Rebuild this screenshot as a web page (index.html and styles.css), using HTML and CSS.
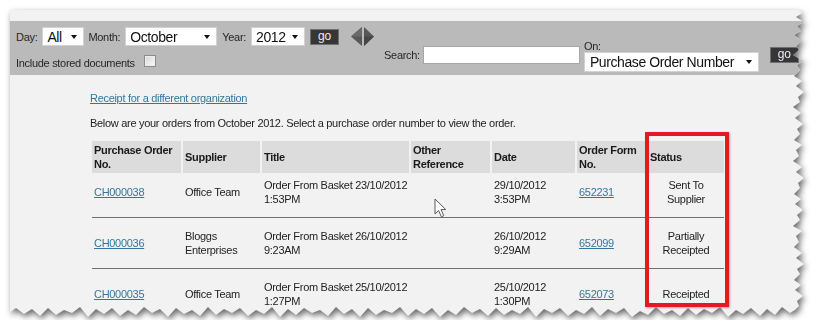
FILE: index.html
```html
<!DOCTYPE html>
<html lang="en">
<head>
    <meta charset="UTF-8">
    <meta name="viewport" content="width=device-width, initial-scale=1.0">
    <title>Purchase Orders</title>
    <link rel="stylesheet" href="styles.css">
</head>
<body>

<div class="shot">
    <div class="page">
        <div class="top-strip"></div>

        <form class="toolbar">
            <div class="filters">
                <div class="filter-row">
                    <label>Day:</label>
                    <div class="select sel-day">All<svg viewBox="0 0 6 4"><path d="M0 0H6L3 4Z"/></svg></div>
                    <label>Month:</label>
                    <div class="select sel-month">October<svg viewBox="0 0 6 4"><path d="M0 0H6L3 4Z"/></svg></div>
                    <label>Year:</label>
                    <div class="select sel-year">2012<svg viewBox="0 0 6 4"><path d="M0 0H6L3 4Z"/></svg></div>
                    <button type="button" class="go">go</button>
                    <svg class="pager" viewBox="0 0 23 19">
                        <path d="M11 0L0 9.5L11 19Z" fill="#575757"/>
                        <path d="M11 0L0 9.5L11 9.5Z" fill="#6a6a6a"/>
                        <path d="M13 0L23 9.5L13 19Z" fill="#575757"/>
                        <path d="M13 9.5L23 9.5L13 19Z" fill="#474747"/>
                    </svg>
                </div>
                <div class="stored">
                    <label>Include stored documents</label>
                    <span class="checkbox"></span>
                </div>
            </div>

            <div class="search">
                <label>Search:</label>
                <span class="input"></span>
            </div>

            <div class="on">
                <label>On:</label>
                <div class="select sel-field">Purchase Order Number<svg viewBox="0 0 6 4"><path d="M0 0H6L3 4Z"/></svg></div>
            </div>

            <button type="button" class="go go-search">go</button>
        </form>

        <div class="content">
            <a href="#" class="link-org">Receipt for a different organization</a>
            <p class="intro">Below are your orders from October 2012. Select a purchase order number to view the order.</p>

            <div class="orders">
                <table>
                    <colgroup>
                        <col style="width: 91px">
                        <col style="width: 79px">
                        <col style="width: 149px">
                        <col style="width: 81px">
                        <col style="width: 85px">
                        <col style="width: 71px">
                        <col style="width: 76px">
                    </colgroup>
                    <thead>
                        <tr>
                            <th>Purchase Order No.</th>
                            <th>Supplier</th>
                            <th>Title</th>
                            <th>Other Reference</th>
                            <th>Date</th>
                            <th>Order Form No.</th>
                            <th>Status</th>
                        </tr>
                    </thead>
                    <tbody>
                        <tr class="first">
                            <td><a href="#">CH000038</a></td>
                            <td>Office Team</td>
                            <td>Order From Basket 23/10/2012 1:53PM</td>
                            <td></td>
                            <td>29/10/2012 3:53PM</td>
                            <td><a href="#">652231</a></td>
                            <td class="status">Sent To Supplier</td>
                        </tr>
                        <tr>
                            <td><a href="#">CH000036</a></td>
                            <td>Bloggs Enterprises</td>
                            <td>Order From Basket 26/10/2012 9:23AM</td>
                            <td></td>
                            <td>26/10/2012 9:29AM</td>
                            <td><a href="#">652099</a></td>
                            <td class="status">Partially Receipted</td>
                        </tr>
                        <tr class="last">
                            <td><a href="#">CH000035</a></td>
                            <td>Office Team</td>
                            <td>Order From Basket 25/10/2012 1:27PM</td>
                            <td></td>
                            <td>25/10/2012 1:30PM</td>
                            <td><a href="#">652073</a></td>
                            <td class="status">Receipted</td>
                        </tr>
                    </tbody>
                </table>

                <div class="highlight"></div>
                <svg class="cursor" viewBox="0 0 13 20">
                    <path d="M1 1V16L4.6 12.6L7.4 18.8L9.8 17.7L7 11.6H11.8Z" fill="#fff" stroke="#5a5a5a" stroke-width="1" stroke-linejoin="round"/>
                </svg>
            </div>
        </div>
    </div>
</div>

</body>
</html>
```

FILE: styles.css
```css
body { margin: 0; background: #fff; font-family: "Liberation Sans", Arial, sans-serif; font-size: 11px; color: #222; letter-spacing: -0.3px; }

.shot { width: 796px; margin: 10px 0 0 10px; filter: drop-shadow(2px 3px 3px rgba(0, 0, 0, 0.6)); }
.page {
    height: 310px; background: #f2f2f2; overflow: hidden;
    clip-path: polygon(0 0, 788px 0, 792px 3px, 786px 7px, 794px 12px, 787px 16px, 791px 21px, 784px 25px, 792px 31px, 786px 36px, 789px 40px, 783px 45px, 793px 51px, 787px 55px, 790px 60px, 784px 66px, 792px 71px, 786px 76px, 794px 82px, 788px 87px, 790px 92px, 783px 97px, 791px 103px, 785px 108px, 793px 114px, 787px 119px, 790px 124px, 784px 130px, 792px 135px, 786px 140px, 789px 146px, 783px 151px, 792px 157px, 786px 162px, 794px 168px, 788px 173px, 790px 178px, 784px 184px, 791px 189px, 785px 194px, 793px 200px, 787px 205px, 790px 210px, 783px 216px, 792px 221px, 786px 226px, 789px 232px, 784px 237px, 792px 243px, 786px 248px, 794px 254px, 787px 259px, 790px 264px, 784px 270px, 791px 275px, 785px 280px, 793px 286px, 787px 291px, 789px 296px, 785px 300px,
        780px 303px, 772px 297px, 765px 305px, 757px 299px, 750px 306px, 741px 298px, 733px 304px, 726px 300px, 718px 307px, 710px 297px, 702px 303px, 694px 299px, 686px 305px, 678px 298px, 670px 306px, 662px 300px, 654px 304px, 646px 297px, 638px 305px, 630px 301px, 622px 307px, 614px 298px, 606px 303px, 598px 299px, 590px 306px, 582px 297px, 574px 304px, 566px 300px, 558px 306px, 550px 298px, 542px 303px, 534px 299px, 526px 307px, 518px 297px, 510px 304px, 502px 300px, 494px 305px, 486px 298px, 478px 306px, 470px 299px, 462px 303px, 454px 297px, 446px 305px, 438px 300px, 430px 307px, 422px 298px, 414px 304px, 406px 299px, 398px 306px, 390px 297px, 382px 303px, 374px 300px, 366px 305px, 358px 298px, 350px 307px, 342px 299px, 334px 304px, 326px 297px, 318px 306px, 310px 300px, 302px 303px, 294px 298px, 286px 305px, 278px 299px, 270px 307px, 262px 297px, 254px 304px, 246px 300px, 238px 306px, 230px 298px, 222px 303px, 214px 299px, 206px 305px, 198px 297px, 190px 306px, 182px 300px, 174px 304px, 166px 298px, 158px 307px, 150px 299px, 142px 303px, 134px 297px, 126px 305px, 118px 300px, 110px 306px, 102px 298px, 94px 304px, 86px 299px, 78px 307px, 70px 297px, 62px 303px, 54px 300px, 46px 305px, 38px 298px, 30px 306px, 22px 299px, 14px 304px, 6px 298px, 0 302px);
}
.top-strip { height: 11px; }

/* filter / search bar */
.toolbar { height: 54px; box-sizing: border-box; padding: 6px 0 0 6px; background: #bababa; display: flex; align-items: flex-start; color: #262626; }
.filters { display: flex; flex-direction: column; }
.filter-row { display: flex; align-items: center; height: 19px; }
.filter-row label { margin-right: 5px; }
.select { box-sizing: border-box; height: 19px; background: #fff; border: 1px solid #d2d2d2; display: flex; align-items: center; justify-content: space-between; padding: 0 6px 0 4px; font-size: 14px; letter-spacing: -0.4px; color: #111; }
.select svg { width: 6px; height: 4px; fill: #111; }
.sel-day { width: 42px; margin-right: 4px; }
.sel-month { width: 92px; margin-right: 5px; }
.sel-year { width: 54px; margin-right: 5px; }
.go { box-sizing: border-box; width: 29px; height: 16px; padding: 0 0 2px; background: #363636; border: 1px solid #707070; color: #e6ecf6; font: 12px "Liberation Sans", Arial, sans-serif; line-height: 12px; }
.pager { width: 23px; height: 19px; margin-left: 12px; }
.stored { display: flex; align-items: flex-start; margin-top: 10px; line-height: 14px; }
.checkbox { box-sizing: border-box; width: 12px; height: 12px; margin: -1px 0 0 9px; border: 1px solid #8c8c8c; background: linear-gradient(135deg, #d6d6d6, #fbfbfb); box-shadow: inset 0 0 0 1px #eeeeee; }
.search { display: flex; align-items: center; margin: 19px 0 0 10px; }
.search .input { box-sizing: border-box; width: 157px; height: 18px; margin-left: 3px; background: #fff; border: 1px solid #a6a6a6; }
.on { display: flex; flex-direction: column; margin: 12px 0 0 4px; }
.on label { line-height: 14px; }
.sel-field { width: 175px; height: 20px; margin-top: -1px; padding-left: 5px; }
.go-search { margin: 20px 0 0 11px; }

/* order list */
.content { padding: 16px 0 0 80px; }
.link-org { display: block; line-height: 14px; }
a { color: #33789c; }
.intro { margin: 11px 0; line-height: 14px; }
.orders { position: relative; width: 632px; margin-left: 2px; }
table { width: 632px; table-layout: fixed; border-collapse: separate; border-spacing: 0; }
th { height: 32px; box-sizing: border-box; padding: 2px 0 2px 2px; background: #dcdcdc; border-right: 2px solid #f2f2f2; text-align: left; vertical-align: middle; font-weight: bold; line-height: 14px; color: #1a1a1a; }
th:last-child { border-right: none; }
td { padding: 11px 0 11px 2px; line-height: 14px; vertical-align: middle; border-bottom: 1px solid #707070; }
tr.first td { padding-top: 5px; }
tr.last td { border-bottom: none; }
td.status { text-align: center; padding-left: 6px; padding-right: 6px; }

.highlight { position: absolute; left: 553px; top: -9px; width: 84px; height: 175px; box-sizing: border-box; border: 4px solid #e41a22; box-shadow: 1px 1px 2px rgba(0, 0, 0, 0.3); }
.cursor { position: absolute; left: 342px; top: 57px; width: 13px; height: 20px; }
```
